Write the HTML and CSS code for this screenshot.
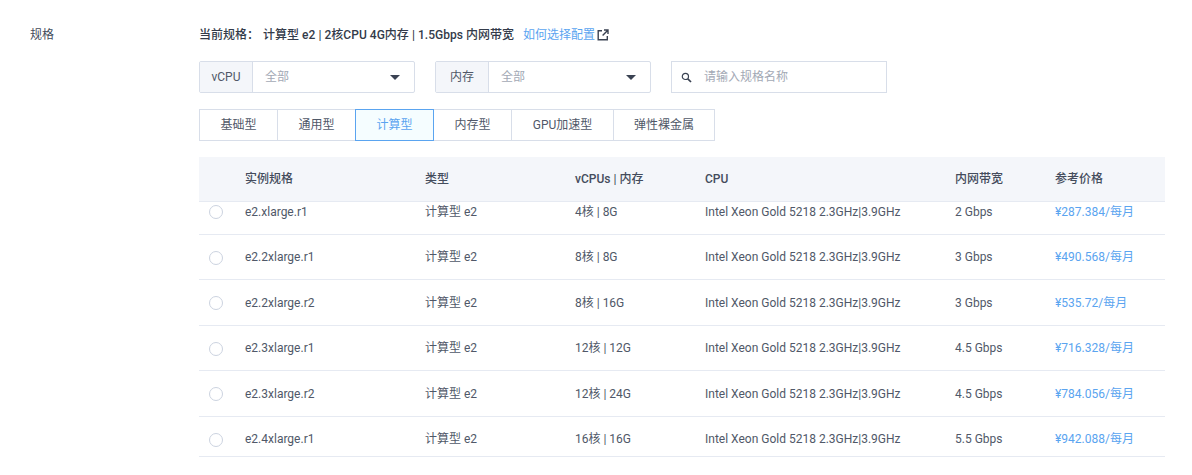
FILE: index.html
```html
<!DOCTYPE html>
<html lang="zh-CN">
<head>
    <meta charset="UTF-8">
    <title>规格</title>
    <link rel="stylesheet" href="styles.css">
</head>
<body>

    <div class="spec">
        <div class="spec-label">规格</div>
        <div class="spec-main">
            <div class="current">
                <span class="current-name">当前规格：</span>
                <span class="current-text">计算型 e2 | 2核CPU 4G内存 | 1.5Gbps 内网带宽</span>
                <a class="help" href="#">如何选择配置</a>
                <svg class="help-icon" width="12" height="12" viewBox="0 0 12 12" fill="none" stroke="#3a4252" stroke-width="1.4">
                    <path d="M5 1.7H1.2v9.1h9.1V7"/>
                    <path d="M7 1h4v4M10.8 1.2 5.6 6.4"/>
                </svg>
            </div>

            <div class="filters">
                <div class="select">
                    <span class="select-name">vCPU</span>
                    <span class="select-value">全部</span>
                    <span class="caret"></span>
                </div>
                <div class="select">
                    <span class="select-name">内存</span>
                    <span class="select-value">全部</span>
                    <span class="caret"></span>
                </div>
                <div class="search">
                    <svg width="11" height="11" viewBox="0 0 11 11" fill="none" stroke="#3a4252">
                        <circle cx="4.4" cy="4.4" r="3.1" stroke-width="1.2"/>
                        <path d="M6.8 6.8 10 10" stroke-width="1.7"/>
                    </svg>
                    <span class="search-text">请输入规格名称</span>
                </div>
            </div>

            <div class="tabs">
                <div class="tab tab-1">基础型</div>
                <div class="tab tab-1">通用型</div>
                <div class="tab tab-1 active">计算型</div>
                <div class="tab tab-1">内存型</div>
                <div class="tab tab-2">GPU加速型</div>
                <div class="tab tab-3">弹性裸金属</div>
            </div>

            <div class="table">
                <div class="row head">
                    <div></div>
                    <div>实例规格</div>
                    <div>类型</div>
                    <div>vCPUs | 内存</div>
                    <div>CPU</div>
                    <div>内网带宽</div>
                    <div>参考价格</div>
                </div>
                <div class="table-body">
                    <div class="rows">
                        <div class="row">
                            <div><span class="radio"></span></div>
                            <div>e2.xlarge.r1</div>
                            <div>计算型 e2</div>
                            <div>4核 | 8G</div>
                            <div>Intel Xeon Gold 5218 2.3GHz|3.9GHz</div>
                            <div>2 Gbps</div>
                            <div class="price">¥287.384/每月</div>
                        </div>
                        <div class="row">
                            <div><span class="radio"></span></div>
                            <div>e2.2xlarge.r1</div>
                            <div>计算型 e2</div>
                            <div>8核 | 8G</div>
                            <div>Intel Xeon Gold 5218 2.3GHz|3.9GHz</div>
                            <div>3 Gbps</div>
                            <div class="price">¥490.568/每月</div>
                        </div>
                        <div class="row">
                            <div><span class="radio"></span></div>
                            <div>e2.2xlarge.r2</div>
                            <div>计算型 e2</div>
                            <div>8核 | 16G</div>
                            <div>Intel Xeon Gold 5218 2.3GHz|3.9GHz</div>
                            <div>3 Gbps</div>
                            <div class="price">¥535.72/每月</div>
                        </div>
                        <div class="row">
                            <div><span class="radio"></span></div>
                            <div>e2.3xlarge.r1</div>
                            <div>计算型 e2</div>
                            <div>12核 | 12G</div>
                            <div>Intel Xeon Gold 5218 2.3GHz|3.9GHz</div>
                            <div>4.5 Gbps</div>
                            <div class="price">¥716.328/每月</div>
                        </div>
                        <div class="row">
                            <div><span class="radio"></span></div>
                            <div>e2.3xlarge.r2</div>
                            <div>计算型 e2</div>
                            <div>12核 | 24G</div>
                            <div>Intel Xeon Gold 5218 2.3GHz|3.9GHz</div>
                            <div>4.5 Gbps</div>
                            <div class="price">¥784.056/每月</div>
                        </div>
                        <div class="row">
                            <div><span class="radio"></span></div>
                            <div>e2.4xlarge.r1</div>
                            <div>计算型 e2</div>
                            <div>16核 | 16G</div>
                            <div>Intel Xeon Gold 5218 2.3GHz|3.9GHz</div>
                            <div>5.5 Gbps</div>
                            <div class="price">¥942.088/每月</div>
                        </div>
                    </div>
                </div>
            </div>
        </div>
    </div>

</body>
</html>
```

FILE: styles.css
```css
* {
    box-sizing: border-box;
}
body {
    margin: 0;
    background: #fff;
    font-family: Roboto, "Noto Sans CJK SC", sans-serif;
    font-size: 12px;
    line-height: 17px;
    color: #505868;
}
.spec {
    display: flex;
    padding: 27px 27px 0 30px;
}
.spec-label {
    width: 169px;
    flex-shrink: 0;
    color: #434b5b;
}
.spec-main {
    flex: 1;
}
.current {
    display: flex;
    align-items: center;
    height: 17px;
    font-weight: 500;
    color: #333b4a;
}
.current-text {
    margin-left: 4px;
    letter-spacing: 0.03px;
}
.help {
    margin-left: 9px;
    font-weight: 400;
    color: #5aa4f0;
    text-decoration: none;
}
.help-icon {
    margin: -2px 0 0 2px;
}
.filters {
    display: flex;
    margin-top: 17px;
}
.select {
    display: flex;
    align-items: center;
    width: 216px;
    height: 32px;
    margin-right: 20px;
    border: 1px solid #d8dee9;
    border-radius: 2px;
}
.select-name {
    width: 53px;
    height: 100%;
    line-height: 30px;
    text-align: center;
    background: #f4f6fa;
    border-right: 1px solid #d8dee9;
}
.select-value {
    flex: 1;
    padding: 1px 0 0 12px;
    color: #a3a9b5;
}
.caret {
    width: 0;
    height: 0;
    margin-right: 14px;
    border-left: 5.5px solid transparent;
    border-right: 5.5px solid transparent;
    border-top: 5.5px solid #3a4252;
}
.search {
    display: flex;
    align-items: center;
    width: 216px;
    height: 32px;
    padding-left: 9px;
    border: 1px solid #d8dee9;
}
.search-text {
    margin-left: 12px;
    padding-top: 1px;
    color: #a3a9b5;
}
.tabs {
    display: flex;
    margin-top: 16px;
}
.tab {
    height: 32px;
    margin-right: -1px;
    line-height: 30px;
    text-align: center;
    border: 1px solid #d8dee9;
}
.tab-1 {
    width: 79px;
}
.tab-2 {
    width: 103px;
}
.tab-3 {
    width: 102px;
}
.active {
    position: relative;
    color: #5aa4f0;
    background: #f5fdff;
    border-color: #5aa4f0;
}
.table {
    margin-top: 16px;
}
.row {
    display: grid;
    grid-template-columns: 46px 180px 150px 130px 250px 100px 110px;
    align-items: center;
    height: 45.5px;
    padding-top: 2px;
    border-bottom: 1px solid #e6eaf2;
}
.head {
    height: 45px;
    padding-top: 0;
    font-weight: 500;
    color: #444c5c;
    background: #f4f6fa;
}
.table-body {
    height: 255px;
    overflow: hidden;
    border-bottom: 1px solid #e6eaf2;
}
.rows {
    margin-top: -13px;
}
.radio {
    display: block;
    width: 14px;
    height: 14px;
    margin-left: 10px;
    border: 1px solid #ccd3e0;
    border-radius: 50%;
}
.price {
    color: #5aa4f0;
}
```
